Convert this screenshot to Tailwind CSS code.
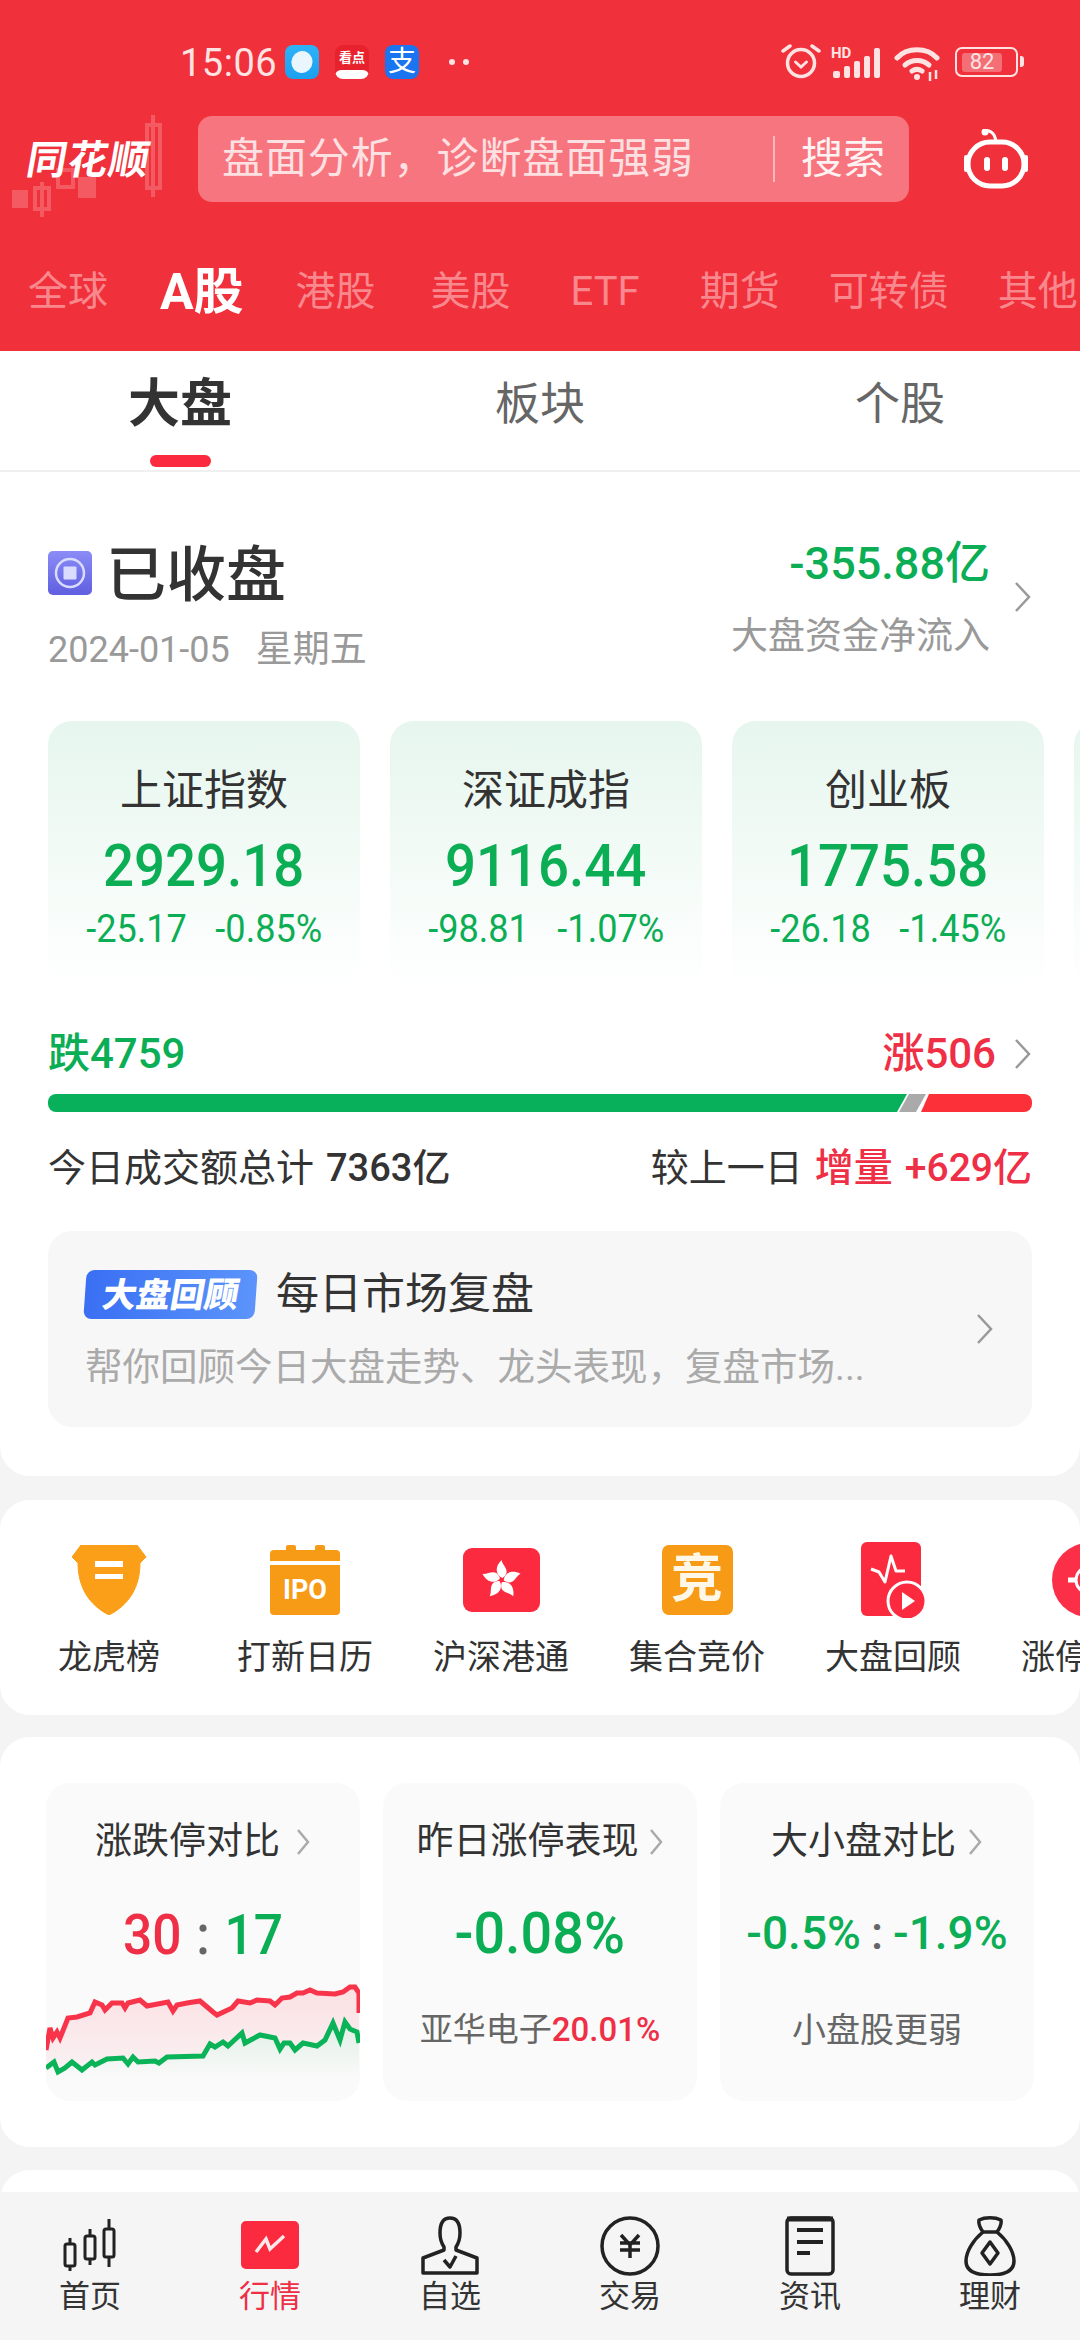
<!DOCTYPE html>
<html lang="zh-CN">
<head>
<meta charset="UTF-8" />
<title>行情</title>
<script src="https://cdn.jsdelivr.net/npm/@tailwindcss/browser@4"></script>
</head>
<body class="font-['Roboto','Noto_Sans_CJK_SC',sans-serif] bg-[#f4f4f4]">
<div class="w-[1080px] h-[2340px] flex flex-col overflow-hidden">

  <!-- red header -->
  <header class="relative h-[351px] shrink-0 bg-[#f0303a] overflow-hidden">
    <!-- candles behind the logo -->
    <svg class="absolute left-0 top-[110px] opacity-20" width="170" height="120" viewBox="0 0 170 120" fill="none">
      <rect x="12" y="80" width="16" height="18" fill="#fff"/>
      <path d="M42 72v35M35 78h14v21H35z" stroke="#fff" stroke-width="4"/>
      <rect x="58" y="60" width="15" height="17" stroke="#fff" stroke-width="4"/>
      <rect x="78" y="67" width="18" height="21" fill="#fff"/>
      <path d="M153 5v82M147 15h13v63h-13z" stroke="#fff" stroke-width="4"/>
    </svg>

    <div class="relative h-[38px] mt-[43px]">
      <span class="absolute left-[180px] top-[1px] text-[38px] leading-[38px] text-[#ffe3e3] tracking-[0.5px]">15:06</span>
      <div class="absolute left-[285px] top-[2px] flex gap-[16px]">
        <svg width="34" height="34" viewBox="0 0 34 34"><defs><linearGradient id="b1" x1="0" y1="0" x2="0" y2="1"><stop offset="0" stop-color="#2fb2f7"/><stop offset="1" stop-color="#1aa0f0"/></linearGradient></defs><rect width="34" height="34" rx="8" fill="url(#b1)"/><ellipse cx="17" cy="17" rx="10.500" ry="11" fill="#eaf6fe" transform="rotate(25 17 17)"/></svg>
        <div class="relative w-[34px] h-[34px] rounded-[8px] bg-[#e8222c] overflow-hidden flex justify-center">
          <span class="text-[13px] leading-[26px] font-bold text-white whitespace-nowrap">看点</span>
          <div class="absolute left-0 bottom-0 w-full h-[9px] bg-white rounded-t-[6px]"></div>
        </div>
        <div class="w-[34px] h-[34px] rounded-[8px] bg-[#1b74f0] flex items-center justify-center text-[28px] leading-none text-white">支</div>
      </div>
      <div class="absolute left-[449px] top-[16px] flex gap-[8px]">
        <span class="w-[6px] h-[6px] rounded-full bg-[#ffe3e3]"></span>
        <span class="w-[6px] h-[6px] rounded-full bg-[#ffe3e3]"></span>
      </div>
      <!-- alarm -->
      <svg class="absolute left-[781px] top-0" width="40" height="36" viewBox="0 0 40 36" fill="none" stroke="#ffe3e3" stroke-linecap="round">
        <circle cx="20" cy="20" r="13.500" stroke-width="3.500"/>
        <path d="M14.500 19l5.500 5 5.500-5" stroke-width="3"/>
        <path d="M2 8l7-5M38 8l-7-5" stroke-width="3.500"/>
      </svg>
      <!-- HD + signal -->
      <span class="absolute left-[831px] top-[3px] text-[15px] leading-[15px] font-bold text-[#ffe3e3]">HD</span>
      <svg class="absolute left-[833px] top-[4px]" width="48" height="32" viewBox="0 0 48 32" fill="#ffe3e3">
        <rect x="0" y="24" width="7" height="7" rx="2"/><rect x="11" y="19" width="6" height="12" rx="2"/><rect x="21" y="14" width="6" height="17" rx="2"/><rect x="31" y="9" width="6" height="22" rx="2"/><rect x="41" y="1" width="6" height="30" rx="2"/>
      </svg>
      <!-- wifi -->
      <svg class="absolute left-[894px] top-[3px]" width="48" height="36" viewBox="0 0 48 36" fill="none" stroke="#ffe3e3" stroke-width="5" stroke-linecap="round">
        <path d="M3 12C13 1 33 1 43 12"/><path d="M11 19c7-6 17-6 24 0"/><path d="M18 25c3-2 7-2 10 0"/>
        <circle cx="23" cy="31" r="3" fill="#ffe3e3" stroke="none"/>
        <path d="M36 26v9M42 24v9" stroke-width="2.500" stroke-linecap="butt"/>
      </svg>
      <!-- battery -->
      <div class="absolute left-[955px] top-[4px] w-[63px] h-[30px] rounded-[7px] border-[2.500px] border-[#ffe3e3] flex items-center pl-[5px]">
        <div class="relative w-[40px] h-[19px] rounded-[3px] bg-[#ffffff]/30 flex items-center justify-center text-[22px] leading-none text-[#ffe3e3]">82</div>
      </div>
      <div class="absolute left-[1020px] top-[13px] w-[4px] h-[11px] rounded-r-[3px] bg-[#ffe3e3]"></div>
    </div>

    <div class="relative mt-[35px] h-[86px] flex items-center">
      <div class="w-[198px] pl-[27px] shrink-0">
        <span class="block mt-[3px] w-[125px] text-[40px] leading-[44px] font-bold text-white -skew-x-[10deg] tracking-[1px] whitespace-nowrap">同花顺</span>
      </div>
      <div class="w-[711px] h-[86px] rounded-[14px] bg-[#f7757e] flex items-center">
        <span class="w-[575px] pl-[24px] text-[42px] leading-none tracking-[0.9px] text-[#fde0e2] whitespace-nowrap">盘面分析，诊断盘面强弱</span>
        <span class="w-[2px] h-[46px] bg-[#fbb8bc]"></span>
        <span class="ml-[26px] text-[42px] leading-none text-[#fff2f2] whitespace-nowrap">搜索</span>
      </div>
      <svg class="ml-[54px]" width="66" height="60" viewBox="0 0 66 60" fill="none" stroke="#fff">
        <path d="M22 2c4-1 7 1 9 4 1 2 2 4 2 7" stroke-width="3"/>
        <circle cx="22" cy="3" r="3.500" fill="#fff" stroke="none"/>
        <rect x="5" y="13" width="56" height="44" rx="22" stroke-width="5"/>
        <path d="M3 28v13M63 28v13" stroke-width="4" stroke-linecap="round"/>
        <rect x="21" y="28" width="6" height="14" rx="3" fill="#fff" stroke="none"/>
        <rect x="39" y="28" width="6" height="14" rx="3" fill="#fff" stroke="none"/>
      </svg>
    </div>

    <nav class="relative mt-[61px] h-[58px] flex items-center gap-[52px] pl-[28px] text-[40px] leading-[58px] text-[#f9888e] whitespace-nowrap">
      <span>全球</span>
      <span class="text-[50px] font-bold text-white">A股</span>
      <span>港股</span>
      <span class="ml-[3px]">美股</span>
      <span class="mx-[8px]">ETF</span>
      <span>期货</span>
      <span class="-ml-[3px]">可转债</span>
      <span class="-ml-[3px]">其他</span>
    </nav>
  </header>

  <main class="flex-1 min-h-0 overflow-hidden">
    <!-- market section -->
    <section class="bg-white rounded-b-[30px] h-[1125px]">
      <div class="grid grid-cols-3 h-[121px] border-b-[2px] border-[#f0f0f0]">
        <div class="flex flex-col items-center pt-[25px]">
          <span class="text-[52px] leading-[58px] font-bold text-[#333]">大盘</span>
          <span class="mt-[21px] w-[61px] h-[12px] rounded-full bg-[#fb2a3f]"></span>
        </div>
        <div class="flex justify-center pt-[25px] text-[45px] leading-[58px] text-[#666]">板块</div>
        <div class="flex justify-center pt-[25px] text-[45px] leading-[58px] text-[#666]">个股</div>
      </div>

      <div class="pl-[48px] pr-[48px]">
        <div class="flex justify-between items-start pt-[71px]">
          <div>
            <div class="flex items-center h-[60px]">
              <svg width="44" height="44" viewBox="0 0 44 44"><defs><linearGradient id="st" x1="0" y1="0" x2="0" y2="1"><stop offset="0" stop-color="#8b8cf6"/><stop offset="1" stop-color="#5f5fe0"/></linearGradient></defs><rect width="44" height="44" rx="5" fill="url(#st)"/><circle cx="22" cy="22" r="14" fill="none" stroke="#d9dbff" stroke-width="2.500"/><rect x="15.500" y="15.500" width="13" height="13" rx="1" fill="#d9dbff"/></svg>
              <span class="ml-[14px] mt-[6px] text-[60px] leading-[60px] font-medium text-[#333]">已收盘</span>
            </div>
            <div class="mt-[25px] text-[36px] leading-[44px] text-[#999] whitespace-nowrap">2024-01-05<span class="ml-[26px] text-[37px]">星期五</span></div>
          </div>
          <div class="flex items-start">
            <div class="flex flex-col items-end -mt-[3px]">
              <span class="text-[45px] leading-[48px] font-medium text-[#0bae55]">-355.88亿</span>
              <span class="mt-[27px] text-[37px] leading-[44px] text-[#999]">大盘资金净流入</span>
            </div>
            <svg class="ml-[24px] mt-[38px]" width="18" height="32" viewBox="0 0 18 32" fill="none" stroke="#999" stroke-width="2.500"><path d="M2 2l13 14L2 30"/></svg>
          </div>
        </div>

        <div class="flex gap-[30px] mt-[49px] -mr-[48px] overflow-hidden">
          <div class="w-[312px] h-[269px] shrink-0 rounded-[24px] bg-linear-to-b from-[#e6f6ee] to-white flex flex-col items-center pt-[45px]">
            <span class="text-[42px] leading-[50px] text-[#333]">上证指数</span>
            <span class="mt-[15px] text-[60px] leading-[70px] font-medium text-[#0bae55] scale-x-[0.91]">2929.18</span>
            <div class="mt-[8px] flex gap-[30px] text-[38px] leading-[40px] text-[#0bae55] scale-x-[0.95]"><span>-25.17</span><span>-0.85%</span></div>
          </div>
          <div class="w-[312px] h-[269px] shrink-0 rounded-[24px] bg-linear-to-b from-[#e6f6ee] to-white flex flex-col items-center pt-[45px]">
            <span class="text-[42px] leading-[50px] text-[#333]">深证成指</span>
            <span class="mt-[15px] text-[60px] leading-[70px] font-medium text-[#0bae55] scale-x-[0.91]">9116.44</span>
            <div class="mt-[8px] flex gap-[30px] text-[38px] leading-[40px] text-[#0bae55] scale-x-[0.95]"><span>-98.81</span><span>-1.07%</span></div>
          </div>
          <div class="w-[312px] h-[269px] shrink-0 rounded-[24px] bg-linear-to-b from-[#e6f6ee] to-white flex flex-col items-center pt-[45px]">
            <span class="text-[42px] leading-[50px] text-[#333]">创业板</span>
            <span class="mt-[15px] text-[60px] leading-[70px] font-medium text-[#0bae55] scale-x-[0.91]">1775.58</span>
            <div class="mt-[8px] flex gap-[30px] text-[38px] leading-[40px] text-[#0bae55] scale-x-[0.95]"><span>-26.18</span><span>-1.45%</span></div>
          </div>
          <div class="w-[312px] h-[269px] shrink-0 rounded-[24px] bg-linear-to-b from-[#e6f6ee] to-white"></div>
        </div>

        <div class="mt-[42px] h-[44px] flex justify-between items-center text-[42px] leading-[44px]">
          <span class="font-medium text-[#0bae55]">跌4759</span>
          <div class="flex items-center">
            <span class="font-medium text-[#ee2f45]">涨506</span>
            <svg class="ml-[18px]" width="18" height="32" viewBox="0 0 18 32" fill="none" stroke="#999" stroke-width="2.500"><path d="M2 2l13 14L2 30"/></svg>
          </div>
        </div>

        <svg class="block mt-[18px]" width="984" height="18" viewBox="0 0 984 18">
          <path d="M8 0H859L849 18H8a8 8 0 0 1-8-8V8a8 8 0 0 1 8-8z" fill="#08b05c"/>
          <path d="M861 0H878L868 18H851z" fill="#aaa"/>
          <path d="M881 0H976a8 8 0 0 1 8 8V10a8 8 0 0 1-8 8H873z" fill="#fb3038"/>
        </svg>

        <div class="mt-[34px] h-[44px] flex justify-between items-center text-[38px] leading-[44px] text-[#333] whitespace-nowrap">
          <div>今日成交额总计<span class="ml-[12px] font-medium">7363亿</span></div>
          <div>较上一日<span class="ml-[12px] text-[39px] font-medium text-[#ee2f45]">增量<span class="ml-[12px]">+629亿</span></span></div>
        </div>

        <div class="mt-[41px] h-[196px] rounded-[24px] bg-[#f7f7f7] flex items-center pl-[37px] pr-[38px]">
          <div class="flex-1">
            <div class="flex items-center h-[50px]">
              <div class="w-[171px] h-[49px] rounded-[8px] bg-linear-to-r from-[#3a6ff3] to-[#5c94fb] -skew-x-[4deg] flex items-center justify-center">
                <span class="text-[34px] leading-none font-black text-white -skew-x-[6deg] whitespace-nowrap">大盘回顾</span>
              </div>
              <span class="ml-[20px] text-[43px] leading-[50px] text-[#333] whitespace-nowrap">每日市场复盘</span>
            </div>
            <div class="mt-[26px] text-[37.500px] leading-[44px] text-[#aaa] whitespace-nowrap">帮你回顾今日大盘走势、龙头表现，复盘市场...</div>
          </div>
          <svg width="18" height="32" viewBox="0 0 18 32" fill="none" stroke="#999" stroke-width="2.500"><path d="M2 2l13 14L2 30"/></svg>
        </div>
      </div>
    </section>

    <!-- quick entries -->
    <section class="mt-[24px] h-[215px] bg-white rounded-[30px] flex pl-[11px] pt-[45px] overflow-hidden">
      <div class="w-[196px] shrink-0 flex flex-col items-center">
        <svg width="76" height="70" viewBox="0 0 76 70"><path d="M10 0H66L75 12 69 18C69 42 58 60 38 70 18 60 7 42 7 18L1 12z" fill="#fb9f18" stroke="#fb9f18" stroke-linejoin="round"/><rect x="24" y="16" width="28" height="6" fill="#fff"/><rect x="24" y="29" width="28" height="5" fill="#fff"/></svg>
        <span class="mt-[22px] text-[34px] leading-[40px] text-[#333] whitespace-nowrap">龙虎榜</span>
      </div>
      <div class="w-[196px] shrink-0 flex flex-col items-center">
        <svg width="70" height="70" viewBox="0 0 70 70" fill="#f79a16"><rect x="16" y="0" width="10" height="7" rx="2"/><rect x="45" y="0" width="10" height="7" rx="2"/><path d="M4 5H66a4 4 0 0 1 4 4V16H0V9a4 4 0 0 1 4-4z"/><path d="M0 20H70V66a4 4 0 0 1-4 4H4a4 4 0 0 1-4-4z"/></svg>
        <span class="-mt-[42px] h-[42px] text-[27px] leading-[34px] font-bold text-white">IPO</span>
        <span class="mt-[22px] text-[34px] leading-[40px] text-[#333] whitespace-nowrap">打新日历</span>
      </div>
      <div class="w-[196px] shrink-0 flex flex-col items-center">
        <svg class="mt-[3px] mb-[3px]" width="77" height="64" viewBox="0 0 77 64"><rect width="77" height="64" rx="9" fill="#fb2a3f"/><g fill="#fff" transform="translate(38.500 32)"><path d="M1-2C-6-5-7-13 0-20 1-15 6-12 5-7 4-5 3-3 1-2z"/><path d="M1-2C-6-5-7-13 0-20 1-15 6-12 5-7 4-5 3-3 1-2z" transform="rotate(72)"/><path d="M1-2C-6-5-7-13 0-20 1-15 6-12 5-7 4-5 3-3 1-2z" transform="rotate(144)"/><path d="M1-2C-6-5-7-13 0-20 1-15 6-12 5-7 4-5 3-3 1-2z" transform="rotate(216)"/><path d="M1-2C-6-5-7-13 0-20 1-15 6-12 5-7 4-5 3-3 1-2z" transform="rotate(288)"/></g></svg>
        <span class="mt-[22px] text-[34px] leading-[40px] text-[#333] whitespace-nowrap">沪深港通</span>
      </div>
      <div class="w-[196px] shrink-0 flex flex-col items-center">
        <div class="w-[71px] h-[70px] rounded-[7px] bg-[#f79a16] flex items-center justify-center text-[52px] leading-none font-bold text-[#fff8e8]">竞</div>
        <span class="mt-[22px] text-[34px] leading-[40px] text-[#333] whitespace-nowrap">集合竞价</span>
      </div>
      <div class="w-[196px] shrink-0 flex flex-col items-center">
        <svg class="-mt-[3px] -mb-[3px]" width="68" height="76" viewBox="0 0 68 76" fill="none"><rect x="2" y="0" width="60" height="74" rx="6" fill="#fb2a3f"/><path d="M12 27l8 3 6 10 6-26 5 15h9" stroke="#fff" stroke-width="3" stroke-linejoin="round"/><circle cx="48" cy="59" r="19" fill="#fb2a3f" stroke="#fff" stroke-width="3"/><path d="M43 50l13 9-13 9z" fill="#fff"/></svg>
        <span class="mt-[22px] text-[34px] leading-[40px] text-[#333] whitespace-nowrap">大盘回顾</span>
      </div>
      <div class="w-[196px] shrink-0 flex flex-col items-center">
        <svg width="74" height="74" viewBox="0 0 74 74" fill="none" class="-mt-[2px] -mb-[2px]"><circle cx="37" cy="37" r="37" fill="#fb3048"/><circle cx="37" cy="37" r="13" stroke="#fff" stroke-width="3"/><path d="M16 37h8" stroke="#fff" stroke-width="5"/></svg>
        <span class="mt-[22px] text-[34px] leading-[40px] text-[#333] whitespace-nowrap">涨停复盘</span>
      </div>
    </section>

    <!-- comparison cards -->
    <section class="mt-[22px] h-[410px] bg-white rounded-[30px] px-[46px] pt-[46px] flex gap-[23px]">
      <div class="relative w-[314px] h-[318px] shrink-0 rounded-[24px] bg-[#fafafa] overflow-hidden flex flex-col items-center pt-[37px]">
        <div class="flex items-center h-[44px]">
          <span class="text-[37px] leading-[44px] text-[#333] whitespace-nowrap">涨跌停对比</span>
          <svg class="ml-[16px]" width="15" height="28" viewBox="0 0 15 28" fill="none" stroke="#aaa" stroke-width="2.500"><path d="M2 2l10 12L2 26"/></svg>
        </div>
        <div class="mt-[36px] h-[70px] flex items-center text-[56px] leading-[70px] font-medium scale-x-[0.92]">
          <span class="text-[#ee2f45]">30</span><span class="mx-[16px] text-[#666]">:</span><span class="text-[#0bae55]">17</span>
        </div>
        <!-- mini chart -->
        <svg class="absolute left-0 top-[198px]" width="314" height="120" viewBox="0 0 314 120" fill="none">
          <defs>
            <linearGradient id="rf" gradientUnits="userSpaceOnUse" x1="0" y1="0" x2="0" y2="90"><stop offset="0" stop-color="#fcdfe2"/><stop offset="1" stop-color="#f9f1f2"/></linearGradient>
            <linearGradient id="gf" gradientUnits="userSpaceOnUse" x1="0" y1="45" x2="0" y2="98"><stop offset="0" stop-color="#e2efe6"/><stop offset="1" stop-color="#fafafa"/></linearGradient>
          </defs>
          <path d="M0 69L4 47 7 57 11 51 14 57 22 37 31 36 44 32 49 21 56 24 59 29 66 22 76 22 79 27 82 22 94 19 101 25 122 21 127 30 131 24 141 22 154 20 167 31 171 34 186 27 192 20 204 22 211 19 224 20 229 24 236 17 244 16 251 12 257 12 264 9 271 12 289 13 297 11 304 6 309 6 313 12V90H0z" fill="url(#rf)"/>
          <path d="M0 87L4 84 8 81 12 91 19 87 26 81 36 89 46 81 49 84 61 78 77 77 82 83 87 76 92 81 109 80 113 82 121 76 157 75 164 63 169 66 177 61 182 65 196 52 199 62 214 54 229 57 234 68 238 62 244 62 249 69 257 62 271 65 279 59 287 42 294 59 299 41 304 48 311 51 313 62V110H0z" fill="url(#gf)"/>
          <path d="M0 69L4 47 7 57 11 51 14 57 22 37 31 36 44 32 49 21 56 24 59 29 66 22 76 22 79 27 82 22 94 19 101 25 122 21 127 30 131 24 141 22 154 20 167 31 171 34 186 27 192 20 204 22 211 19 224 20 229 24 236 17 244 16 251 12 257 12 264 9 271 12 289 13 297 11 304 6 309 6 313 12V32" stroke="#f8344b" stroke-width="5"/>
          <path d="M0 87L4 84 8 81 12 91 19 87 26 81 36 89 46 81 49 84 61 78 77 77 82 83 87 76 92 81 109 80 113 82 121 76 157 75 164 63 169 66 177 61 182 65 196 52 199 62 214 54 229 57 234 68 238 62 244 62 249 69 257 62 271 65 279 59 287 42 294 59 299 41 304 48 311 51 313 62" stroke="#0ab358" stroke-width="5"/>
        </svg>
      </div>
      <div class="w-[314px] h-[318px] shrink-0 rounded-[24px] bg-[#fafafa] flex flex-col items-center pt-[37px]">
        <div class="flex items-center h-[44px]">
          <span class="text-[37px] leading-[44px] text-[#333] whitespace-nowrap">昨日涨停表现</span>
          <svg class="ml-[10px]" width="15" height="28" viewBox="0 0 15 28" fill="none" stroke="#aaa" stroke-width="2.500"><path d="M2 2l10 12L2 26"/></svg>
        </div>
        <div class="mt-[34px] h-[70px] text-[58px] leading-[70px] font-medium text-[#0bae55] scale-x-[0.96]">-0.08%</div>
        <div class="mt-[42px] text-[33px] leading-[40px] text-[#666] whitespace-nowrap">亚华电子<span class="font-medium text-[#ee2f45]">20.01%</span></div>
      </div>
      <div class="w-[314px] h-[318px] shrink-0 rounded-[24px] bg-[#fafafa] flex flex-col items-center pt-[37px]">
        <div class="flex items-center h-[44px]">
          <span class="text-[37px] leading-[44px] text-[#333] whitespace-nowrap">大小盘对比</span>
          <svg class="ml-[12px]" width="15" height="28" viewBox="0 0 15 28" fill="none" stroke="#aaa" stroke-width="2.500"><path d="M2 2l10 12L2 26"/></svg>
        </div>
        <div class="mt-[34px] h-[70px] flex items-center text-[46px] leading-[70px] font-medium text-[#0bae55] whitespace-nowrap">-0.5%<span class="mx-[10px] text-[#666]">:</span>-1.9%</div>
        <div class="mt-[42px] text-[34px] leading-[40px] text-[#666]">小盘股更弱</div>
      </div>
    </section>

    <section class="mt-[23px] h-[40px] bg-white rounded-t-[30px]"></section>
  </main>

  <!-- bottom nav -->
  <nav class="h-[148px] shrink-0 bg-[#f5f5f5] grid grid-cols-6 pt-[24px] text-[31px] leading-[36px] text-[#333]">
    <div class="flex flex-col items-center">
      <svg width="60" height="60" viewBox="0 0 60 60" fill="none" stroke="#222" stroke-width="3"><path d="M10 22v33M30 13v36M49 3v48"/><rect x="5" y="28" width="10" height="22" rx="2" fill="#f5f5f5"/><rect x="25" y="20" width="10" height="23" rx="2" fill="#f5f5f5"/><rect x="44" y="13" width="10" height="28" rx="2" fill="#f5f5f5"/></svg>
      <span class="mt-[3px]">首页</span>
    </div>
    <div class="flex flex-col items-center text-[#ee2f45]">
      <svg width="60" height="60" viewBox="0 0 60 60"><rect x="1" y="5" width="58" height="48" rx="5" fill="#fb2a3f"/><path d="M16 36L26 23 30 33 44 20" fill="none" stroke="#fde8ea" stroke-width="3.500"/></svg>
      <span class="mt-[3px]">行情</span>
    </div>
    <div class="flex flex-col items-center">
      <svg width="60" height="60" viewBox="0 0 60 60" fill="none" stroke="#222" stroke-width="3.500" stroke-linejoin="round"><path d="M30 2C23 2 20 8 20 17c0 7 2 11 4 14v3L3 42v15H57V42L36 34v-3c2-3 4-7 4-14C40 8 37 2 30 2z"/><path d="M24 44l6 7 6-11"/></svg>
      <span class="mt-[3px]">自选</span>
    </div>
    <div class="flex flex-col items-center">
      <svg width="60" height="60" viewBox="0 0 60 60" fill="none" stroke="#222" stroke-width="3.500"><circle cx="30" cy="30" r="28"/><path d="M21 19l9 10 9-10M20 27H40M20 34H40M30 28V42"/></svg>
      <span class="mt-[3px]">交易</span>
    </div>
    <div class="flex flex-col items-center">
      <svg width="60" height="60" viewBox="0 0 60 60" fill="none" stroke="#222" stroke-width="3.500"><rect x="7" y="2" width="46" height="56" rx="4"/><path d="M17 14H43M17 26H43M17 37H30" stroke-width="4"/><path d="M7 3H53" stroke-width="5"/></svg>
      <span class="mt-[3px]">资讯</span>
    </div>
    <div class="flex flex-col items-center">
      <svg width="60" height="60" viewBox="0 0 60 60" fill="none" stroke="#222" stroke-width="3.500" stroke-linejoin="round"><path d="M19 4c6-3 16-3 22 0 1 5-2 9-4 12 10 8 17 20 17 29 0 9-8 14-24 14S6 54 6 45c0-9 7-21 17-29-2-3-5-7-4-12z"/><path d="M23 16H37"/><path d="M30 26l8 11-8 11-8-11z"/></svg>
      <span class="mt-[3px]">理财</span>
    </div>
  </nav>
</div>
</body>
</html>
